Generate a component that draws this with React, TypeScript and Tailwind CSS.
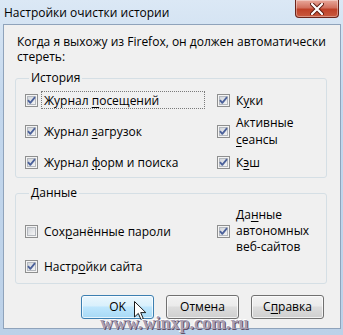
import React from "react";

function Check({ checked }: { checked: boolean }) {
  return (
    <svg width="13" height="13" viewBox="0 0 13 13" className="shrink-0 block">
      <defs>
        <linearGradient id="cbfill" x1="0" y1="0" x2="1" y2="1">
          <stop offset="0" stopColor="#cfd3d9" />
          <stop offset="1" stopColor="#f7f7f7" />
        </linearGradient>
      </defs>
      <rect x="0.5" y="0.5" width="12" height="12" fill="#f4f4f4" stroke="#8e8f8f" />
      <rect x="2.5" y="2.5" width="8" height="8" fill="url(#cbfill)" stroke="#b4b8be" />
      {checked && (
        <path d="M3 6.2 L5.3 8.8 L10 3.2" fill="none" stroke="#4b619a" strokeWidth="1.8" strokeLinejoin="round" />
      )}
    </svg>
  );
}

// label text with one underlined access-key letter
function Label({ text, k }: { text: string; k: number }) {
  return (
    <>
      {text.slice(0, k)}
      <span className="underline underline-offset-[2px]">{text[k]}</span>
      {text.slice(k + 1)}
    </>
  );
}

function Item({
  checked = true,
  children,
  focus = false,
}: {
  checked?: boolean;
  children: React.ReactNode;
  focus?: boolean;
}) {
  return (
    <div className="flex items-center">
      <Check checked={checked} />
      <div
        className={
          "ml-[3px] px-[2px] leading-[17px] border border-dotted " +
          (focus ? "border-[#7a7a7a] w-[164px] h-[18px] leading-[16px]" : "border-transparent")
        }
      >
        {children}
      </div>
    </div>
  );
}

function Btn({ children, active = false }: { children: React.ReactNode; active?: boolean }) {
  return (
    <div
      className={
        "w-[73px] h-[24px] rounded-[3px] border flex items-center justify-center shadow-[inset_0_0_0_1px_rgba(255,255,255,0.7)] " +
        (active
          ? "border-[#3c7fb1] bg-[linear-gradient(#eaf6fd_0%,#d9f0fc_45%,#bee6fd_50%,#a7d9f5_100%)]"
          : "border-[#707070] bg-[linear-gradient(#f2f2f2_0%,#ebebeb_45%,#dddddd_50%,#cfcfcf_100%)]")
      }
    >
      <span>{children}</span>
    </div>
  );
}

export default function App() {
  return (
    <div className="relative w-[343px] h-[335px] overflow-hidden bg-[linear-gradient(#dbe8f5,#c3d7ed_30%,#bcd1e8)] font-['Open_Sans','Noto_Sans',sans-serif] text-[12px] text-black">
      {/* title bar */}
      <div className="h-[24px] flex items-start">
        <span className="pl-[4px] pt-[5px] leading-[16px]">Настройки очистки истории</span>
        <div className="ml-auto mr-[4px] w-[44px] h-[18px] rounded-b-[4px] border border-t-0 border-[#6b241a] bg-[linear-gradient(#e9a99c,#d2715f_45%,#bf4128_55%,#c95a3f)] shadow-[inset_0_0_0_1px_rgba(255,255,255,0.35)] flex items-center justify-center">
          <svg width="14" height="12" viewBox="0 0 14 12">
            <path d="M2 1 L12 11 M12 1 L2 11" stroke="#5a1a10" strokeWidth="4" strokeLinecap="round" />
            <path d="M2 1 L12 11 M12 1 L2 11" stroke="#ffffff" strokeWidth="2.2" strokeLinecap="round" />
          </svg>
        </div>
      </div>

      {/* client area */}
      <div className="ml-[3px] w-[338px] h-[305px] border border-[#8fa3bb] bg-[#f0f0f0] flex flex-col">
        <p className="pl-[13px] pt-[9px] leading-[15px]">
          Когда я выхожу из Firefox, он должен автоматически
          <br />
          стереть:
        </p>

        <fieldset className="mt-[7px] ml-[11px] w-[312px] h-[107px] border border-[#d5dfe5] rounded-[3px] pl-[9px]">
          <legend className="ml-[4px] px-[2px] leading-[14px]">История</legend>
          <div className="mt-[3px] grid grid-cols-[192px_1fr] grid-rows-[24px_24px_24px] gap-y-[7px] items-center">
            <Item focus>
              <Label text="Журнал посещений" k={7} />
            </Item>
            <Item>
              <Label text="Куки" k={1} />
            </Item>
            <Item>
              <Label text="Журнал загрузок" k={7} />
            </Item>
            <Item>
              Активные
              <br />
              <Label text="сеансы" k={0} />
            </Item>
            <Item>
              <Label text="Журнал форм и поиска" k={7} />
            </Item>
            <Item>
              <Label text="Кэш" k={1} />
            </Item>
          </div>
        </fieldset>

        <fieldset className="mt-[8px] ml-[11px] w-[312px] h-[98px] border border-[#d5dfe5] rounded-[3px] pl-[9px]">
          <legend className="ml-[4px] px-[2px] leading-[14px]">Данные</legend>
          <div className="mt-[19px] grid grid-cols-[192px_1fr] grid-rows-[24px_24px] gap-y-[11px] items-center">
            <Item checked={false}>
              <Label text="Сохранённые пароли" k={3} />
            </Item>
            <Item>
              <span className="block leading-[16px]">
                <Label text="Данные" k={2} />
                <br />
                автономных
                <br />
                веб-сайтов
              </span>
            </Item>
            <Item>
              <Label text="Настройки сайта" k={5} />
            </Item>
          </div>
        </fieldset>

        <div className="mt-[11px] pr-[16px] flex justify-end gap-[12px]">
          <Btn active>OK</Btn>
          <Btn>Отмена</Btn>
          <Btn>
            <Label text="Справка" k={1} />
          </Btn>
        </div>
      </div>

      {/* mouse pointer */}
      <svg className="absolute left-[134px] top-[301px]" width="13" height="20" viewBox="0 0 13 20">
        <path d="M0.5 0.5 L0.5 16 L4.3 12.4 L7 18.6 L9.3 17.6 L6.7 11.6 L11.8 11.6 Z" fill="#ffffff" stroke="#1a1a1a" strokeWidth="1" />
      </svg>

      {/* watermark */}
      <div className="absolute left-[100px] top-[314px] font-['Liberation_Serif',serif] font-bold text-[18px] leading-[18px] text-[#a99fb3] [text-shadow:1px_1px_0_#5e5068,-1px_-1px_0_#ffffff]">
        www.winxp.com.ru
      </div>
    </div>
  );
}
